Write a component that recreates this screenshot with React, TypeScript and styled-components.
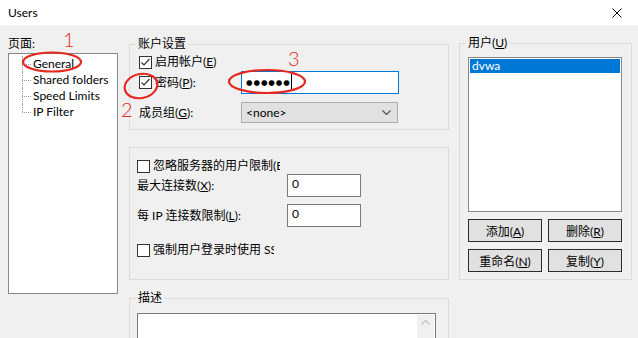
import React from 'react';
import styled, { createGlobalStyle } from 'styled-components';

const FONT = `Lato, "Noto Sans CJK SC", sans-serif`;
const RED = '#e5281f';

const GlobalStyle = createGlobalStyle`
  html, body { margin: 0; padding: 0; background: #f0f0f0; }
  body { font-family: ${FONT}; font-size: 12px; color: #000; }
  * { box-sizing: border-box; }
`;

const Window = styled.div`
  position: relative;
  width: 638px;
  height: 338px;
  overflow: hidden;
  background: #f0f0f0;
`;

const TitleBar = styled.div`
  height: 25px;
  padding: 0 16px 0 8px;
  background: #fff;

  display: flex;
  align-items: center;
  justify-content: space-between;
`;

const Title = styled.span`
  font-size: 12px;
  line-height: 14px;
`;

const Body = styled.div`
  padding-left: 8px;
  display: flex;
  align-items: flex-start;
`;

const PagesColumn = styled.div`
  width: 110px;
  padding-top: 12px;
  display: flex;
  flex-direction: column;
  gap: 2px;
`;

const PlainLabel = styled.span<{ $width?: number }>`
  line-height: 14px;
  white-space: nowrap;
  ${({ $width }) => $width && `width: ${$width}px; flex: none;`}
`;

const Tree = styled.ul`
  margin: 0;
  height: 241px;
  padding: 2px 0 0 0;
  list-style: none;
  background: #fff;
  border: 1px solid #828790;
`;

const TreeItem = styled.li<{ $last?: boolean }>`
  position: relative;
  height: 16px;
  line-height: 16px;
  padding-left: 24px;
  white-space: nowrap;

  &::before {
    content: '';
    position: absolute;
    left: 13px;
    top: 8px;
    width: 9px;
    border-top: 1px dotted #a0a0a0;
  }
  &::after {
    content: '';
    position: absolute;
    left: 13px;
    top: 0;
    height: ${({ $last }) => ($last ? '8px' : '16px')};
    border-left: 1px dotted #a0a0a0;
  }
`;

const MiddleColumn = styled.div`
  width: 320px;
  margin-left: 11px;
  display: flex;
  flex-direction: column;
`;

const UsersColumn = styled.div`
  width: 173px;
  margin-left: 10px;
  margin-top: 11px;
`;

const GroupBox = styled.fieldset<{ $top: number }>`
  margin: ${({ $top }) => $top}px 0 0 0;
  padding: 0;
  min-width: 0;
  border: 1px solid #dcdcdc;
`;

const Legend = styled.legend`
  margin-left: 6px;
  padding: 0 2px;
  line-height: 14px;
  font-size: 12px;
`;

const AccountBody = styled.div`
  padding: 3px 0 6px 9px;
  display: flex;
  flex-direction: column;
`;

const LimitsBody = styled.div`
  padding: 10px 0 21px 7px;
  display: flex;
  flex-direction: column;
`;

const DescBody = styled.div`
  padding: 8px 0 0 7px;
`;

const UsersBody = styled.div`
  padding: 7px 9px 7px 8px;
`;

const Row = styled.div<{ $h: number; $mt?: number }>`
  height: ${({ $h }) => $h}px;
  margin-top: ${({ $mt }) => $mt ?? 0}px;
  display: flex;
  align-items: center;
`;

const CheckRow = styled.label<{ $width: number }>`
  width: ${({ $width }) => $width}px;
  flex: none;
  overflow: hidden;
  white-space: nowrap;
  display: flex;
  align-items: center;
  gap: 3px;
  line-height: 14px;
`;

const Box = styled.span`
  width: 13px;
  height: 13px;
  flex: none;
  border: 1px solid #333;
  background: #fff;
  display: flex;
  align-items: center;
  justify-content: center;
`;

const Key = styled.u`
  text-underline-offset: 1px;
`;

const TextBox = styled.div<{ $width: number; $focused?: boolean }>`
  width: ${({ $width }) => $width}px;
  height: 23px;
  padding: 2px 0 0 4px;
  background: #fff;
  border: 1px solid ${({ $focused }) => ($focused ? '#0078d7' : '#7a7a7a')};
  line-height: 14px;
  display: flex;
  align-items: flex-start;
`;

const PasswordDots = styled.span`
  margin-top: 3px;
  font-family: "DejaVu Sans", sans-serif;
  font-size: 7.5px;
  line-height: 11px;
  letter-spacing: 0.9px;
`;

const Caret = styled.span`
  width: 1px;
  height: 15px;
  margin-left: 0;
  background: #000;
`;

const Combo = styled.div`
  width: 157px;
  height: 21px;
  padding: 0 6px 0 4px;
  background: #e1e1e1;
  border: 1px solid #adadad;
  display: flex;
  align-items: center;
  justify-content: space-between;
  line-height: 14px;
`;

const TextArea = styled.div`
  width: 299px;
  height: 60px;
  padding: 1px;
  background: #fff;
  border: 1px solid #7a7a7a;
  display: flex;
  justify-content: flex-end;
`;

const ScrollTrack = styled.div`
  width: 17px;
  height: 100%;
  padding-top: 5px;
  background: #f0f0f0;
  display: flex;
  justify-content: center;
  align-items: flex-start;
`;

const ListBox = styled.div`
  width: 154px;
  height: 155px;
  padding: 1px;
  background: #fff;
  border: 1px solid #828790;
`;

const ListItem = styled.div<{ $selected?: boolean }>`
  height: 14px;
  padding-left: 2px;
  line-height: 14px;
  background: ${({ $selected }) => ($selected ? '#0078d7' : 'transparent')};
  color: ${({ $selected }) => ($selected ? '#fff' : '#000')};
`;

const ButtonGrid = styled.div`
  margin-top: 7px;
  display: grid;
  grid-template-columns: 74px 74px;
  gap: 7px 6px;
`;

const Button = styled.button`
  height: 23px;
  padding: 0;
  font-family: ${FONT};
  font-size: 12px;
  color: #000;
  background: #e1e1e1;
  border: 1px solid #2b2b2b;
`;

const Overlay = styled.svg`
  position: absolute;
  left: 0;
  top: 0;
  pointer-events: none;
`;

const Mark = styled.span<{ $x: number; $y: number }>`
  position: absolute;
  left: ${({ $x }) => $x}px;
  top: ${({ $y }) => $y}px;
  font-family: Lato, sans-serif;
  font-weight: 300;
  font-size: 20px;
  line-height: 20px;
  color: ${RED};
`;

const Check = ({ checked }: { checked?: boolean }) => (
  <Box>
    {checked && (
      <svg width="11" height="11" viewBox="0 0 11 11">
        <polyline points="1.5,5.5 4,8 9.5,2" fill="none" stroke="#333" strokeWidth="1.2" />
      </svg>
    )}
  </Box>
);

const Chevron = ({ up, color }: { up?: boolean; color: string }) => (
  <svg width="9" height="5" viewBox="0 0 9 5">
    <polyline
      points={up ? '0.5,4.5 4.5,0.5 8.5,4.5' : '0.5,0.5 4.5,4.5 8.5,0.5'}
      fill="none"
      stroke={color}
      strokeWidth="1.2"
    />
  </svg>
);

const pages = ['General', 'Shared folders', 'Speed Limits', 'IP Filter'];
const buttons: [string, string][] = [['添加', 'A'], ['删除', 'R'], ['重命名', 'N'], ['复制', 'Y']];

export default function App() {
  return (
    <Window>
      <GlobalStyle />
      <TitleBar>
        <Title>Users</Title>
        <svg width="10" height="10" viewBox="0 0 10 10">
          <path d="M0.5 0.5 L9.5 9.5 M9.5 0.5 L0.5 9.5" stroke="#000" strokeWidth="1" />
        </svg>
      </TitleBar>

      <Body>
        <PagesColumn>
          <PlainLabel>页面:</PlainLabel>
          <Tree>
            {pages.map((p, i) => (
              <TreeItem key={p} $last={i === pages.length - 1}>{p}</TreeItem>
            ))}
          </Tree>
        </PagesColumn>

        <MiddleColumn>
          <GroupBox $top={12}>
            <Legend>账户设置</Legend>
            <AccountBody>
              <Row $h={16}>
                <CheckRow $width={120}>
                  <Check checked />
                  <span>启用帐户(<Key>E</Key>)</span>
                </CheckRow>
              </Row>
              <Row $h={23} $mt={1}>
                <CheckRow $width={102}>
                  <Check checked />
                  <span>密码(<Key>P</Key>):</span>
                </CheckRow>
                <TextBox $width={158} $focused>
                  <PasswordDots>●●●●●●</PasswordDots>
                  <Caret />
                </TextBox>
              </Row>
              <Row $h={21} $mt={8}>
                <PlainLabel $width={102}>成员组(<Key>G</Key>):</PlainLabel>
                <Combo>
                  <span>&lt;none&gt;</span>
                  <Chevron color="#555" />
                </Combo>
              </Row>
            </AccountBody>
          </GroupBox>

          <GroupBox $top={17}>
            <LimitsBody>
              <Row $h={16}>
                <CheckRow $width={143}>
                  <Check />
                  <span>忽略服务器的用户限制(E)</span>
                </CheckRow>
              </Row>
              <Row $h={23}>
                <PlainLabel $width={150}>最大连接数(<Key>X</Key>):</PlainLabel>
                <TextBox $width={74}>0</TextBox>
              </Row>
              <Row $h={23} $mt={7}>
                <PlainLabel $width={150}>每 IP 连接数限制(<Key>L</Key>):</PlainLabel>
                <TextBox $width={74}>0</TextBox>
              </Row>
              <Row $h={16} $mt={15}>
                <CheckRow $width={137}>
                  <Check />
                  <span>强制用户登录时使用 SSL</span>
                </CheckRow>
              </Row>
            </LimitsBody>
          </GroupBox>

          <GroupBox $top={11}>
            <Legend>描述</Legend>
            <DescBody>
              <TextArea>
                <ScrollTrack>
                  <Chevron up color="#c0c0c0" />
                </ScrollTrack>
              </TextArea>
            </DescBody>
          </GroupBox>
        </MiddleColumn>

        <UsersColumn>
          <GroupBox $top={0}>
            <Legend>用户(<Key>U</Key>)</Legend>
            <UsersBody>
              <ListBox>
                <ListItem $selected>dvwa</ListItem>
              </ListBox>
              <ButtonGrid>
                {buttons.map(([t, k]) => (
                  <Button key={t}>{t}(<Key>{k}</Key>)</Button>
                ))}
              </ButtonGrid>
            </UsersBody>
          </GroupBox>
        </UsersColumn>
      </Body>

      <Overlay width="638" height="338">
        <ellipse cx="52" cy="62" rx="29" ry="9.5" fill="none" stroke={RED} strokeWidth="2.2" />
        <ellipse cx="141" cy="86" rx="16.5" ry="12" transform="rotate(-12 141 86)" fill="none" stroke={RED} strokeWidth="2.2" />
        <ellipse cx="267" cy="81.5" rx="38" ry="11.5" fill="none" stroke={RED} strokeWidth="2.2" />
      </Overlay>
      <Mark $x={63} $y={29}>1</Mark>
      <Mark $x={121} $y={99}>2</Mark>
      <Mark $x={288} $y={48}>3</Mark>
    </Window>
  );
}
